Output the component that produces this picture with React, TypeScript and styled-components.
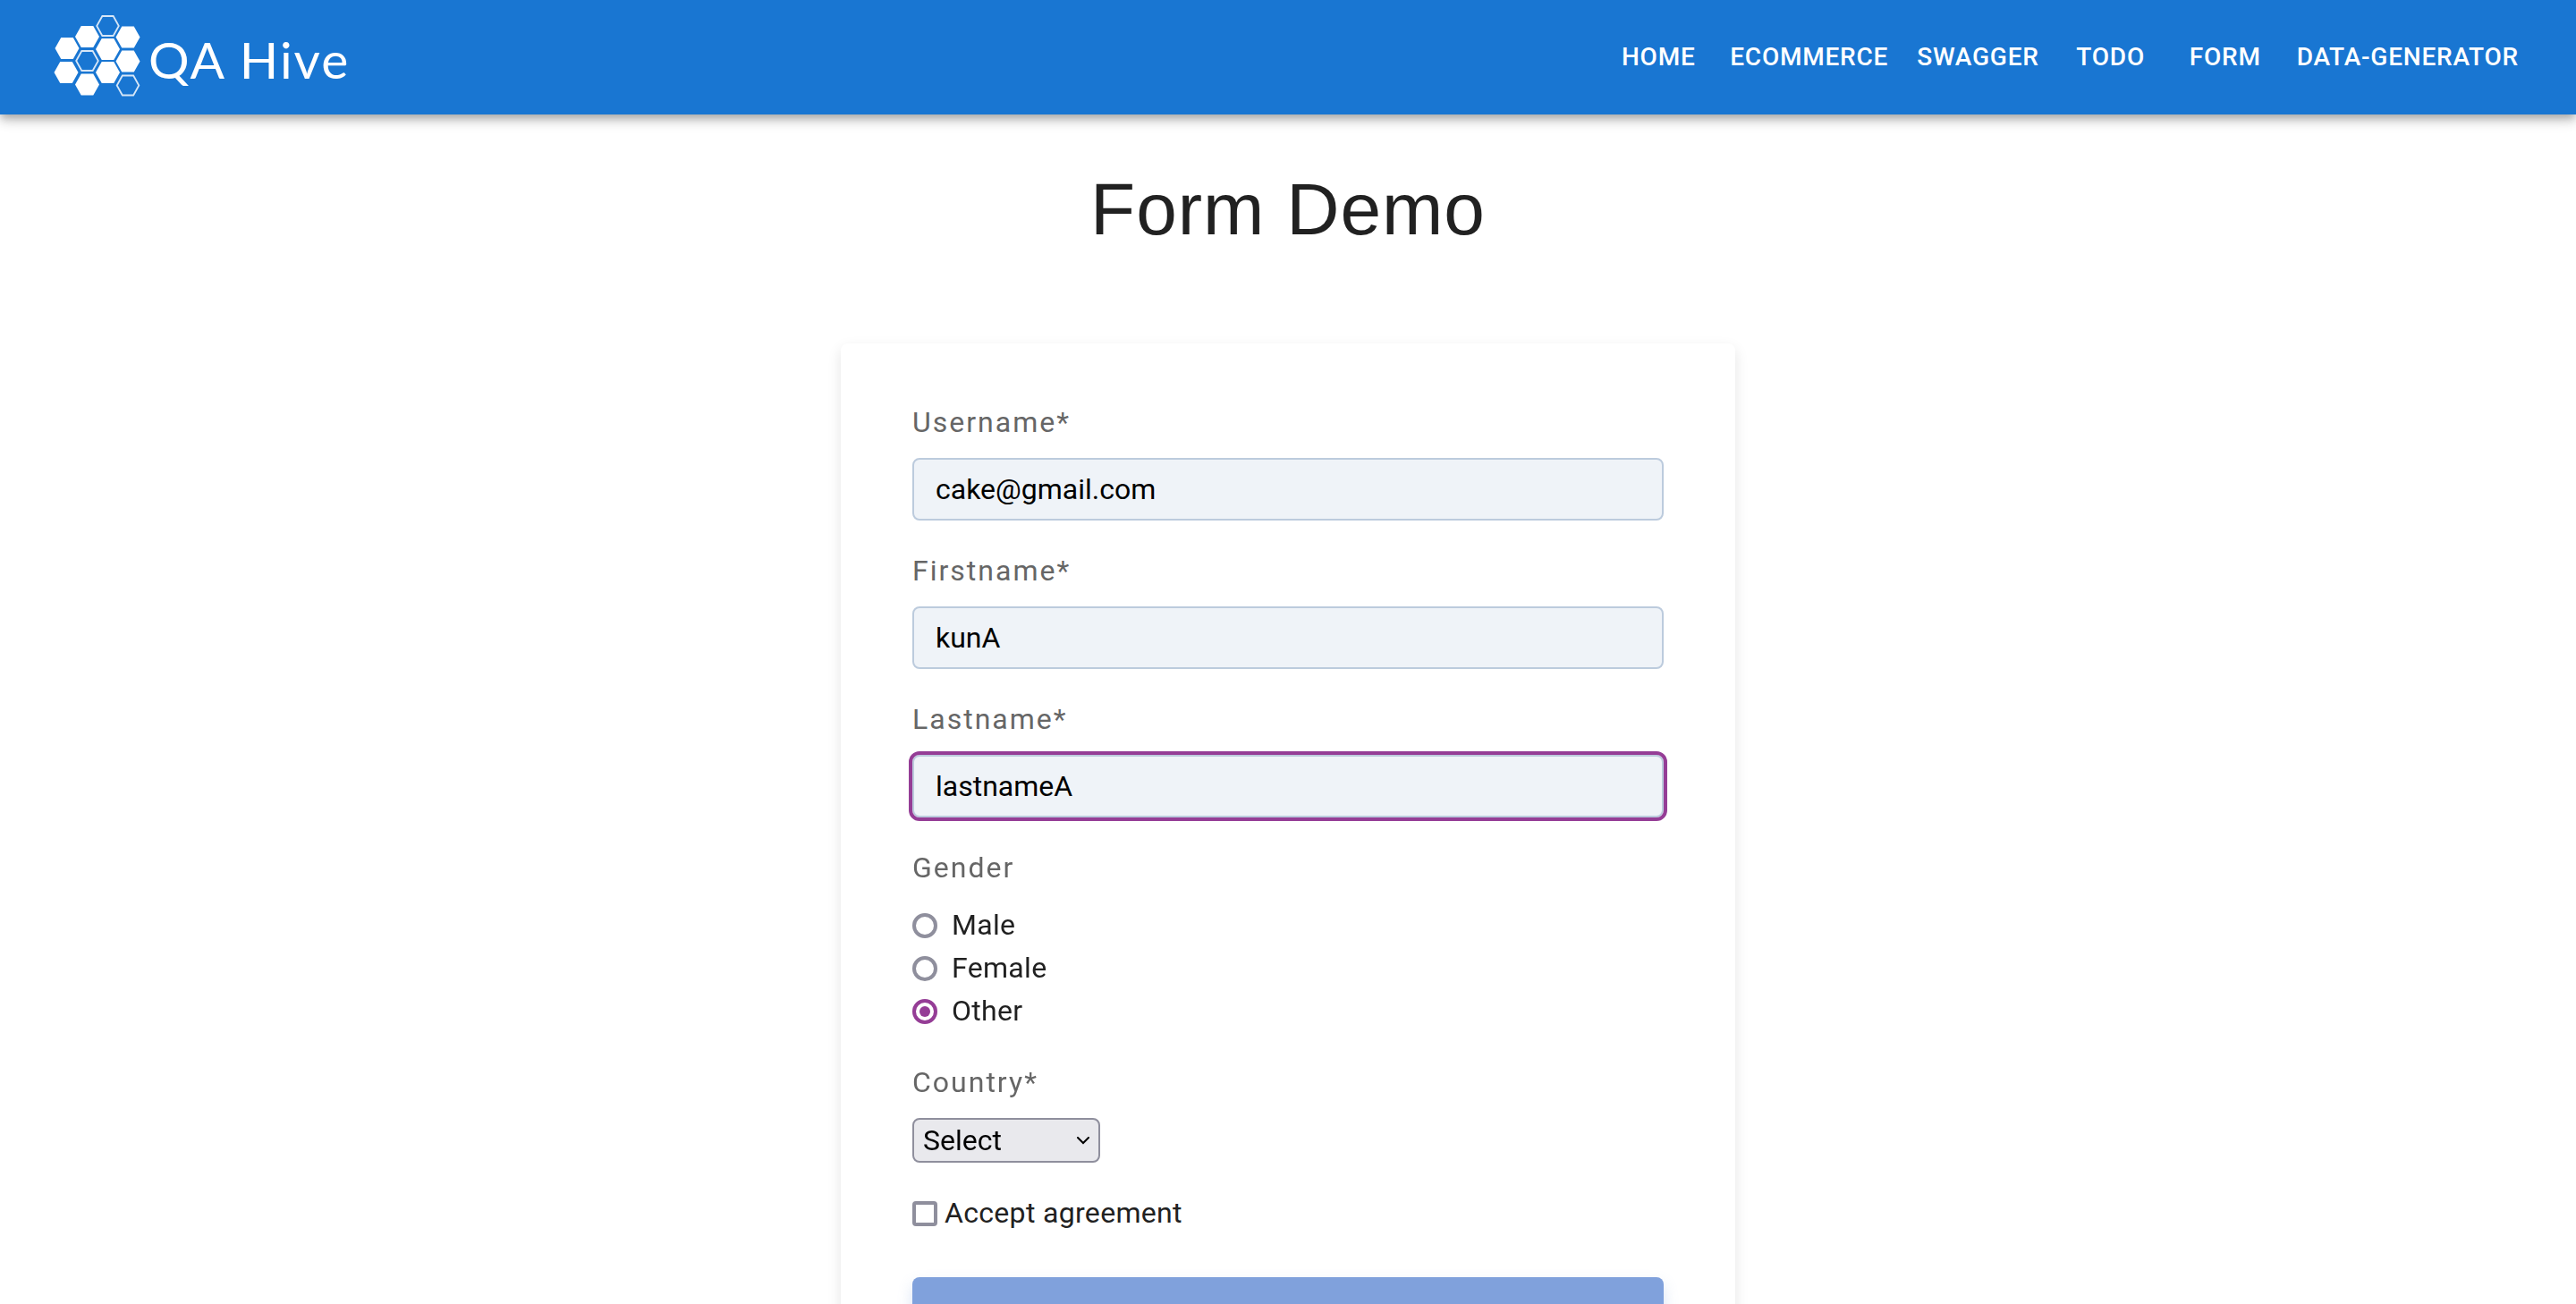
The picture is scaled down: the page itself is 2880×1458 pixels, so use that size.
import React, { useState } from 'react';
import styled, { createGlobalStyle, css } from 'styled-components';

const GlobalStyle = createGlobalStyle`
  *, *::before, *::after { box-sizing: border-box; }
  body {
    margin: 0;
    background: #fff;
    color: #212121;
    font-family: Roboto, "Liberation Sans", sans-serif;
    font-size: 32px;
  }
  h1, fieldset, legend { margin: 0; padding: 0; border: 0; }
`;

const AppBar = styled.header`
  display: flex;
  align-items: center;
  justify-content: space-between;
  height: 128px;
  padding: 0 48px 0 60px;
  background: #1976d2;
  color: #fff;
  box-shadow: 0 4px 8px -2px rgba(0, 0, 0, 0.2), 0 8px 10px 0 rgba(0, 0, 0, 0.14),
    0 2px 20px 0 rgba(0, 0, 0, 0.12);
`;

const Brand = styled.a`
  display: flex;
  align-items: center;
  gap: 8px;
  color: inherit;
  text-decoration: none;
`;

const BrandName = styled.span`
  padding-top: 4px;
  font-family: Lato, sans-serif;
  font-size: 57px;
  line-height: 64px;
  letter-spacing: 2px;
`;

const Nav = styled.nav`
  display: flex;
`;

const NavLink = styled.a`
  min-width: 128px;
  padding: 12px 16px;
  border-radius: 8px;
  color: inherit;
  font-size: 28px;
  font-weight: 500;
  line-height: 50px;
  letter-spacing: 0.028em;
  text-align: center;
  text-decoration: none;
  text-transform: uppercase;
`;

const Main = styled.main`
  display: flex;
  flex-direction: column;
  align-items: center;
  padding: 58px 32px 100px;
`;

const Title = styled.h1`
  font-family: "Liberation Sans", sans-serif;
  font-size: 82px;
  font-weight: 400;
  line-height: 96px;
  letter-spacing: 1px;
`;

const Card = styled.form`
  display: flex;
  flex-direction: column;
  width: 100%;
  max-width: 1000px;
  margin-top: 102px;
  padding: 64px 80px 80px;
  border-radius: 8px;
  background: #fff;
  box-shadow: 0 6px 16px rgba(0, 0, 0, 0.11);
`;

const labelText = css`
  display: block;
  color: #666;
  font-size: 32px;
  line-height: 48px;
  letter-spacing: 2px;
`;

const Field = styled.div`
  margin-bottom: 32px;
`;

const Label = styled.label`
  ${labelText}
  margin-bottom: 16px;
`;

const TextInput = styled.input`
  display: block;
  width: 100%;
  height: 70px;
  padding: 0 24px;
  border: 2px solid #bccbdd;
  border-radius: 8px;
  background: #eff3f8;
  color: #000;
  font: inherit;

  &:focus {
    outline: 4px solid #953d96;
    outline-offset: 0;
  }
`;

const RadioGroup = styled.fieldset`
  margin-bottom: 32px;
`;

const Legend = styled.legend`
  ${labelText}
  margin-bottom: 16px;
`;

const Choice = styled.label<{ $gap: number }>`
  display: flex;
  align-items: center;
  gap: ${(p) => p.$gap}px;
  line-height: 48px;
  letter-spacing: 0.01em;
`;

const Radio = styled.input`
  display: grid;
  place-items: center;
  appearance: none;
  width: 28px;
  height: 28px;
  margin: 2px 0 0;
  border: 4px solid #8f8f9d;
  border-radius: 50%;

  &:checked {
    border-color: #953d96;
  }

  &:checked::before {
    content: "";
    width: 12px;
    height: 12px;
    border-radius: 50%;
    background: #953d96;
  }
`;

const Checkbox = styled.input`
  appearance: none;
  width: 28px;
  height: 28px;
  margin: 2px 0 0;
  border: 4px solid #8f8f9d;
  border-radius: 4px;

  &:checked {
    border-color: #953d96;
    background: #953d96;
  }
`;

const SelectBox = styled.div`
  display: inline-grid;
  align-items: center;

  & > * {
    grid-area: 1 / 1;
  }

  & > svg {
    justify-self: end;
    margin-right: 12px;
    pointer-events: none;
  }
`;

const Select = styled.select`
  appearance: none;
  width: 210px;
  height: 50px;
  padding: 0 40px 0 10px;
  border: 2px solid #8f8f9d;
  border-radius: 8px;
  background: #e9e9ed;
  color: #000;
  font: inherit;
`;

const Submit = styled.button`
  height: 80px;
  margin-top: 48px;
  border: 0;
  border-radius: 8px;
  background: #80a1dc;
  box-shadow: 0 8px 16px rgba(128, 161, 220, 0.3);
  color: #fff;
  font: inherit;
  font-size: 28px;
  font-weight: 500;
  text-transform: uppercase;
`;

const hexPoints = (cx: number, cy: number, r: number, h: number) =>
  [
    [cx - r, cy],
    [cx - r / 2, cy - h],
    [cx + r / 2, cy - h],
    [cx + r, cy],
    [cx + r / 2, cy + h],
    [cx - r / 2, cy + h],
  ]
    .map((p) => p.join(','))
    .join(' ');

const filledCells = [
  [15, 37], [37.5, 24], [83, 24.5], [60.5, 38], [14, 64], [60.5, 64], [83, 51.5], [37.5, 77.5],
];
const hollowCells = [[60.5, 12], [37.5, 51], [83, 78.5]];

function Hive() {
  return (
    <svg width="98" height="94" viewBox="0 0 98 94" aria-hidden="true">
      {filledCells.map(([x, y]) => (
        <polygon key={`${x}-${y}`} points={hexPoints(x, y, 13.5, 12)} fill="#fff" />
      ))}
      {hollowCells.map(([x, y]) => (
        <polygon
          key={`${x}-${y}`}
          points={hexPoints(x, y, 12.3, 11)}
          fill="none"
          stroke="#d6e6f7"
          strokeWidth="1.8"
        />
      ))}
    </svg>
  );
}

const pages = ['Home', 'Ecommerce', 'Swagger', 'Todo', 'Form', 'Data-Generator'];
const genders = ['Male', 'Female', 'Other'];

export default function App() {
  const [gender, setGender] = useState('Other');

  return (
    <>
      <GlobalStyle />
      <AppBar>
        <Brand href="#home">
          <Hive />
          <BrandName>QA Hive</BrandName>
        </Brand>
        <Nav>
          {pages.map((page) => (
            <NavLink key={page} href={`#${page.toLowerCase()}`}>
              {page}
            </NavLink>
          ))}
        </Nav>
      </AppBar>
      <Main>
        <Title>Form Demo</Title>
        <Card onSubmit={(e) => e.preventDefault()}>
          <Field>
            <Label htmlFor="username">Username*</Label>
            <TextInput id="username" defaultValue="cake@gmail.com" />
          </Field>
          <Field>
            <Label htmlFor="firstname">Firstname*</Label>
            <TextInput id="firstname" defaultValue="kunA" />
          </Field>
          <Field>
            <Label htmlFor="lastname">Lastname*</Label>
            <TextInput id="lastname" defaultValue="lastnameA" autoFocus />
          </Field>
          <RadioGroup>
            <Legend>Gender</Legend>
            {genders.map((g) => (
              <Choice key={g} $gap={16}>
                <Radio type="radio" name="gender" checked={gender === g} onChange={() => setGender(g)} />
                {g}
              </Choice>
            ))}
          </RadioGroup>
          <Field>
            <Label htmlFor="country">Country*</Label>
            <SelectBox>
              <Select id="country" defaultValue="">
                <option value="">Select</option>
                <option value="th">Thailand</option>
              </Select>
              <svg width="14" height="9" viewBox="0 0 14 9" aria-hidden="true">
                <path d="M1 1l6 6 6-6" fill="none" stroke="#000" strokeWidth="2" strokeLinecap="round" />
              </svg>
            </SelectBox>
          </Field>
          <Choice $gap={8}>
            <Checkbox type="checkbox" />
            Accept agreement
          </Choice>
          <Submit type="submit">Submit</Submit>
        </Card>
      </Main>
    </>
  );
}
